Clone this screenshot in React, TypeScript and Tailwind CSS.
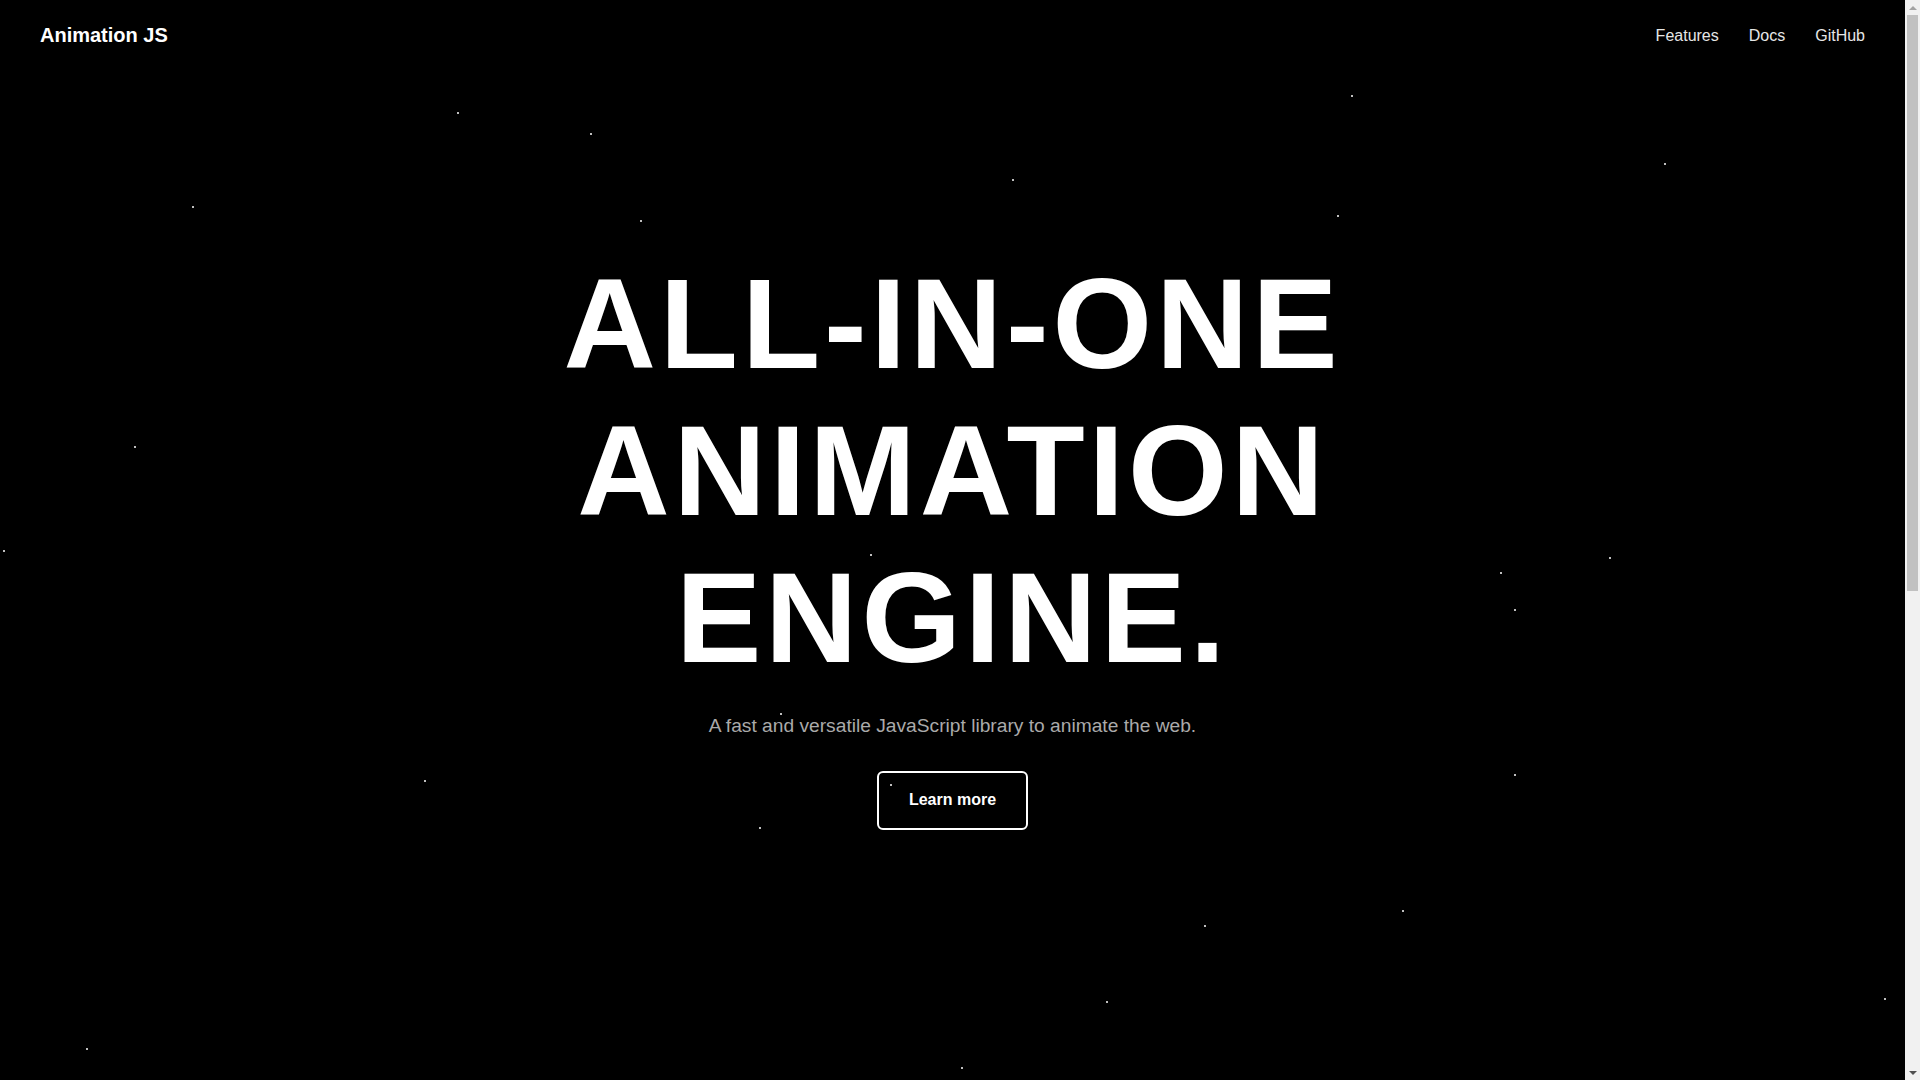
import React from 'react';

// star field, coordinates are pixels inside the hero
const stars: [number, number][] = [
  [458, 113], [591, 134], [193, 207], [641, 221], [1013, 180], [1352, 96],
  [1338, 216], [1665, 164], [135, 447], [4, 551], [871, 555], [1501, 573],
  [1610, 558], [1515, 610], [781, 714], [425, 781], [891, 785], [760, 828],
  [1515, 775], [1403, 911], [1205, 926], [1107, 1002], [1885, 999], [87, 1049],
  [962, 1068],
];

const Nav = () => (
  <nav className="absolute top-0 left-0 right-0 z-20 flex items-center justify-between px-10 py-6 leading-[normal]">
    <a href="#" className="text-[20px] font-bold text-white">Animation JS</a>
    <div className="flex items-center gap-[30px] text-base leading-[normal] text-[#e6e6e6]">
      <a href="#features">Features</a>
      <a href="#docs">Docs</a>
      <a href="#github">GitHub</a>
    </div>
  </nav>
);

const Hero = () => (
  <section className="relative h-screen overflow-hidden flex flex-col items-center justify-center text-center">
    {stars.map(([x, y], i) => (
      <span
        key={i}
        className="absolute z-10 w-[2px] h-[2px] rounded-full bg-white"
        style={{ left: x - 1, top: y - 1 }}
      />
    ))}
    <h1 className="text-[128px] leading-[1.149] font-bold tracking-[0.03em] text-white mb-6">
      ALL-IN-ONE
      <br />
      ANIMATION
      <br />
      ENGINE.
    </h1>
    <p className="text-[1.2rem] leading-[1.15] text-[#aaaaaa] mb-[34px]">
      A fast and versatile JavaScript library to animate the web.
    </p>
    <button className="border-2 border-white rounded-md px-[30px] py-[18px] text-base font-bold text-white leading-[1.15]">
      Learn more
    </button>
  </section>
);

const Scrollbar = () => (
  <div className="fixed top-0 right-0 z-30 w-[15px] h-screen bg-[#f1f1f1] flex flex-col items-center">
    <div className="h-[15px] w-full flex items-center justify-center">
      <div className="w-0 h-0 border-x-[4px] border-x-transparent border-b-[4px] border-b-[#a3a3a3]" />
    </div>
    <div className="w-[11px] h-[576px] bg-[#c1c1c1]" />
    <div className="flex-1" />
    <div className="h-[15px] w-full flex items-center justify-center">
      <div className="w-0 h-0 border-x-[4px] border-x-transparent border-t-[4px] border-t-[#505050]" />
    </div>
  </div>
);

export default function App() {
  return (
    <div className="relative h-screen overflow-hidden bg-black pr-[15px] font-['Liberation_Sans',Arial,sans-serif]">
      <div className="relative">
        <Nav />
        <Hero />
      </div>
      <Scrollbar />
    </div>
  );
}
